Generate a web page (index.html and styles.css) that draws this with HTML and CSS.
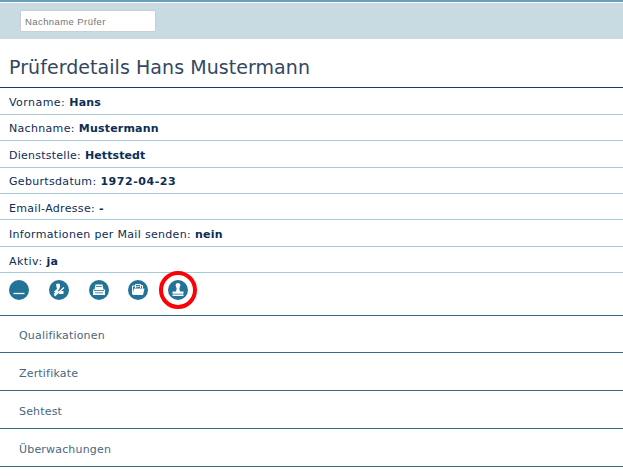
FILE: index.html
```html
<!DOCTYPE html>
<html lang="de">
<head>
<meta charset="utf-8">
<title>Prüferdetails</title>
<link rel="stylesheet" href="styles.css">
</head>
<body>
<header class="search-bar"><input class="search" type="text" placeholder="Nachname Prüfer"></header>
<main>
<h1 class="title"><span>Prüferdetails Hans Mustermann</span></h1>
<ul class="details">
<li class="first-name"><span>Vorname:</span> <b>Hans</b></li>
<li><span>Nachname:</span> <b>Mustermann</b></li>
<li class="office"><span>Dienststelle:</span> <b>Hettstedt</b></li>
<li><span>Geburtsdatum:</span> <b class="date">1972-04-23</b></li>
<li class="low"><span>Email-Adresse:</span> <b>-</b></li>
<li><span>Informationen per Mail senden:</span> <b>nein</b></li>
<li class="low active"><span>Aktiv:</span> <b>ja</b></li>
</ul>
<div class="actions">
<svg class="icon" viewBox="0 0 20 20"><circle cx="10" cy="10" r="10"/><path class="line" d="M4.500 13.500h11"/></svg>
<svg class="icon" viewBox="0 0 20 20"><circle cx="10" cy="10" r="10"/><path class="fill" d="M7 4.500Q9 2.500 11 4.500V7L10 9.500L6.500 13L5 11.500L8 9Z M11.500 11H14.500V14H9.500Z"/><path class="line" d="M5.500 16L15 7.500M5 14.500l4-3.500"/></svg>
<svg class="icon" viewBox="0 0 20 20"><circle cx="10" cy="10" r="10"/><path class="fill" d="M6.500 4.500h7l1 5h1.500v5.500h-12V9.500h1.500z"/><path class="cut" d="M7 6.500h6M5 10.500h10M6 12.800h8"/></svg>
<svg class="icon" viewBox="0 0 20 20"><circle cx="10" cy="10" r="10"/><path class="thin" d="M4.500 14v-8h3l1 1h1M7.500 8V4.500h5V8M12.500 5.500h2v3M9.500 6.500h2"/><path class="fill" d="M6 8.500h10.500L15 15H4.500z"/></svg>
<span class="marked"><svg class="icon" viewBox="0 0 20 20"><circle cx="10" cy="10" r="10"/><path class="fill" d="M8 6.500L7.500 5a2.600 2.600 0 0 1 5 0L12 6.500l-.7 2 .7 3h3.500v2.300h-11v-2.300H8l.7-3zM4.500 14.600h11V16h-11z"/></svg></span>
</div>
<nav class="sections">
<a>Qualifikationen</a>
<a>Zertifikate</a>
<a>Sehtest</a>
<a>Überwachungen</a>
</nav>
</main>
</body>
</html>
```

FILE: styles.css
```css
* { box-sizing: border-box; }
body { margin: 0; background: #fff; color: #0c2d54; font: 11px/14px "DejaVu Sans", Verdana, sans-serif; overflow: hidden; }
.search-bar { height: 39px; padding: 7px 20px 0; border-top: 2px solid #6b9fb8; background: linear-gradient(#fff 1px, #c8dbe3 1px); }
.search { display: block; width: 136px; height: 22px; margin-top: 1px; padding: 0 4px; border: 1px solid #cecece; border-radius: 2px; font: 9.5px "Liberation Sans", Arial, sans-serif; letter-spacing: 0.42px; }
.search::placeholder { color: #757575; }
.title { height: 49px; margin: 0; padding: 16px 9px 0; border-bottom: 1px solid #0d416b; color: #34475f; font-size: 19px; font-weight: 400; line-height: 24px; letter-spacing: 0.06px; }
.details { display: grid; grid-template-rows: 27px 26px 27px 26px 26px 27px 26px; margin: 0; padding: 0; list-style: none; }
.details li { display: flex; align-items: flex-end; gap: 4px; padding: 0 9px 4px; border-bottom: 1px solid #a5c8d8; white-space: nowrap; }
.details .low { padding-bottom: 3px; }
.details span { letter-spacing: 0.32px; }
.details .first-name span, .details .active span { letter-spacing: 0.45px; }
.details .office span { letter-spacing: 0.25px; }
.details b { letter-spacing: 0.2px; }
.details .office b { letter-spacing: 0.1px; }
.details .date { letter-spacing: 0.55px; }
.actions { display: flex; gap: 19.75px; height: 42px; padding: 7px 9px 0; }
.icon { display: block; width: 20px; height: 20px; fill: #237398; }
.icon .fill { fill: #fff; }
.icon .line, .icon .thin, .icon .cut { fill: none; stroke: #fff; stroke-width: 1.3; }
.icon .thin { stroke-width: 1; }
.icon .cut { stroke: #237398; stroke-width: 0.8; }
.marked { position: relative; height: 20px; }
.marked::after { content: ""; position: absolute; inset: -9px; border: 4px solid #fb0207; border-radius: 50%; }
.sections { display: grid; grid-template-rows: 37px 38px 38px 38px; border-top: 1px solid #376a86; }
.sections a { display: flex; align-items: flex-end; padding: 0 19px 9px; border-bottom: 1px solid #376a86; color: #486780; letter-spacing: 0.18px; }
```
